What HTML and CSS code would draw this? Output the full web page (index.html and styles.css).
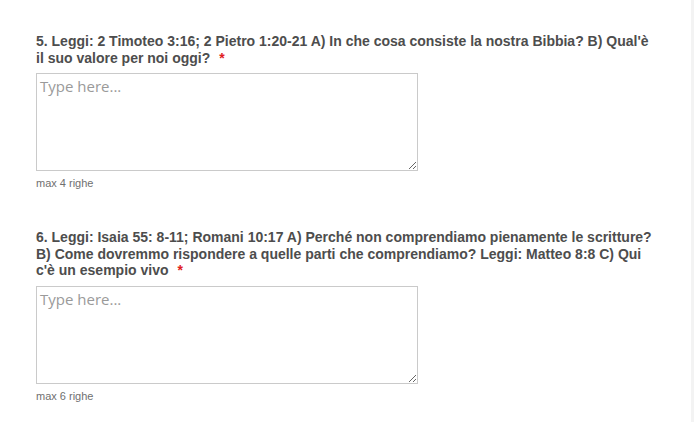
FILE: index.html
```html
<!DOCTYPE html>
<html lang="it">
<head>
  <meta charset="UTF-8">
  <title>Domande</title>
  <link rel="stylesheet" href="styles.css">
</head>
<body>

<div class="page">
  <div class="question">
    <label class="question-label" for="q5">5. Leggi: 2 Timoteo 3:16; 2 Pietro 1:20-21 A) In che cosa consiste la nostra Bibbia? B) Qual'è il suo valore per noi oggi?<span class="required">*</span></label>
    <textarea id="q5" placeholder="Type here..."></textarea>
    <div class="hint">max 4 righe</div>
  </div>

  <div class="question">
    <label class="question-label" for="q6">6. Leggi: Isaia 55: 8-11; Romani 10:17 A) Perché non comprendiamo pienamente le scritture? B) Come dovremmo rispondere a quelle parti che comprendiamo? Leggi: Matteo 8:8 C) Qui c'è un esempio vivo<span class="required">*</span></label>
    <textarea id="q6" placeholder="Type here..."></textarea>
    <div class="hint">max 6 righe</div>
  </div>
</div>

</body>
</html>
```

FILE: styles.css
```css
html {
  background-color: #f3f3f3;
}

body {
  margin: 0;
  font-family: "Liberation Sans", Arial, sans-serif;
}

.page {
  width: 691px;
  height: 422px;
  background-color: #fff;
  padding: 33px 0 0 36px;
  box-sizing: border-box;
}

.question {
  width: 622px;
  margin-bottom: 39px;
}

.question-label {
  display: block;
  font-size: 14px;
  font-weight: bold;
  line-height: 16.5px;
  color: #4d4d4d;
}

.required {
  color: #e02020;
  margin-left: 9px;
}

.question textarea {
  display: block;
  width: 382px;
  height: 98px;
  box-sizing: border-box;
  margin-top: 7px;
  padding: 2px 3px;
  border: 1px solid #cacaca;
  font-family: "Open Sans", sans-serif;
  font-size: 15px;
  color: #333;
}

.question textarea::placeholder {
  color: #9a9a9a;
}

.hint {
  margin-top: 6px;
  font-size: 11px;
  line-height: 13px;
  color: #6f6f6f;
}
```
